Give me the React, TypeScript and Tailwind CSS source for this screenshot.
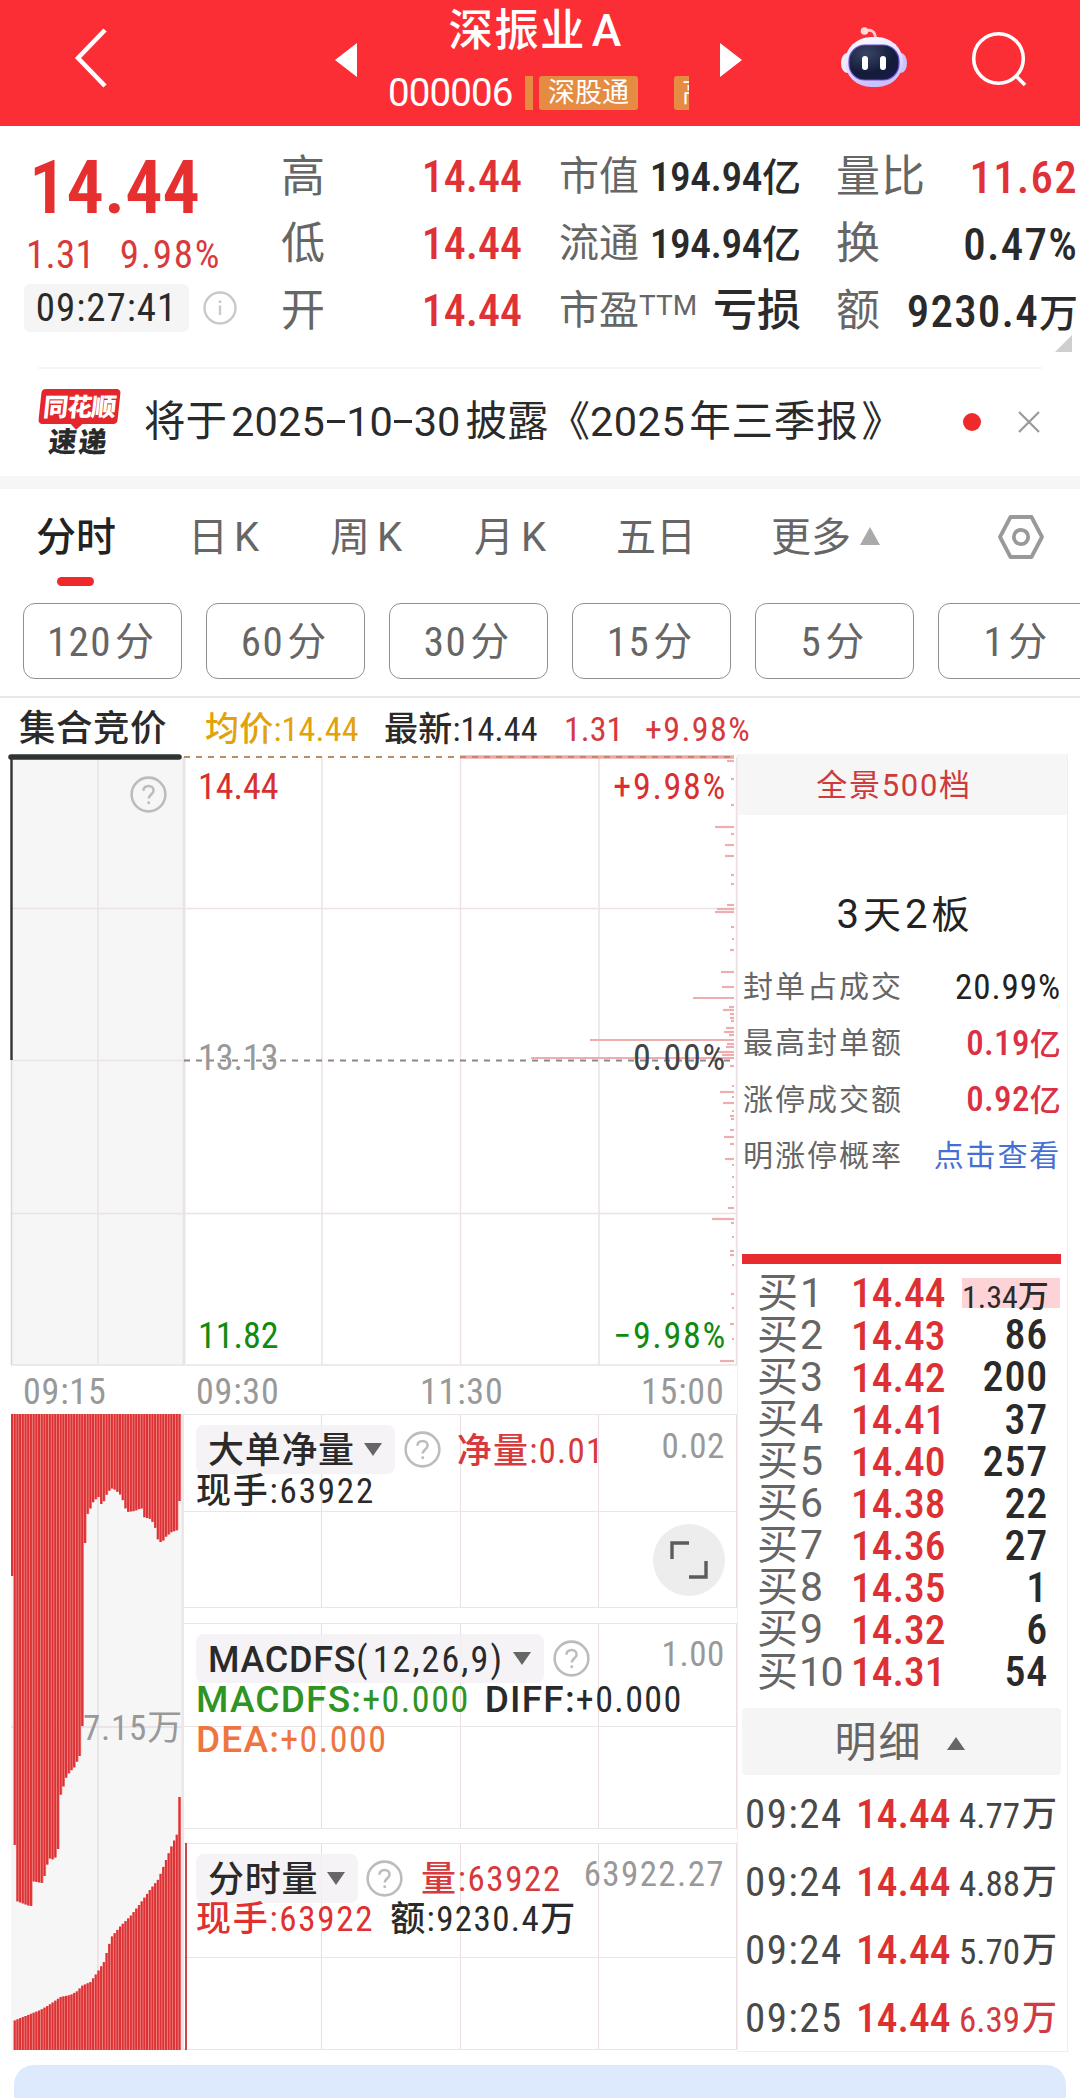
import type { ReactNode } from 'react';

const NUM = '[font-stretch:75%]';

const stats = [
  [
    { label: '高', value: '14.44', tone: 'text-[#e03236]' },
    { label: '低', value: '14.44', tone: 'text-[#e03236]' },
    { label: '开', value: '14.44', tone: 'text-[#e03236]' },
  ],
  [
    { label: '市值', value: '194.94', unit: '亿', tone: 'text-[#2a2a2a]' },
    { label: '流通', value: '194.94', unit: '亿', tone: 'text-[#2a2a2a]' },
    { label: '市盈', sup: 'TTM', value: '', unit: '亏损', tone: 'text-[#2a2a2a]' },
  ],
  [
    { label: '量比', value: '11.62', tone: 'text-[#e03236]' },
    { label: '换', value: '0.47%', tone: 'text-[#2a2a2a]' },
    { label: '额', value: '9230.4', unit: '万', tone: 'text-[#2a2a2a]' },
  ],
];

const statLabelStyles = ['', 'text-[40px]', 'tracking-[1px]'];
const statValueStyles = ['text-[44px]', 'text-[41.5px] tracking-[-0.5px] -mr-[2px]', 'text-[45px] tracking-[1.2px] -mr-[1px]'];

const periods = ['120', '60', '30', '15', '5', '1'];

const bids = [
  ['1', '14.44', '1.34'],
  ['2', '14.43', '86'],
  ['3', '14.42', '200'],
  ['4', '14.41', '37'],
  ['5', '14.40', '257'],
  ['6', '14.38', '22'],
  ['7', '14.36', '27'],
  ['8', '14.35', '1'],
  ['9', '14.32', '6'],
  ['10', '14.31', '54'],
];

const trades = [
  ['09:24', '14.44', '4.77'],
  ['09:24', '14.44', '4.88'],
  ['09:24', '14.44', '5.70'],
  ['09:25', '14.44', '6.39'],
];

// [y, length] of the volume-by-price ticks on the right edge of the chart
const priceTicks = [
  [4, 7], [22, 3], [48, 3], [70, 19], [77, 3], [88, 9], [99, 9], [118, 3], [127, 3],
  [148, 7], [152, 17], [155, 19], [170, 3], [182, 2], [193, 4], [215, 13], [230, 12],
  [241, 41], [250, 5], [253, 11], [257, 4], [261, 4], [264, 3], [271, 8], [275, 10],
  [278, 5], [283, 144], [287, 7], [290, 8], [295, 17], [298, 12], [301, 203], [309, 4],
  [329, 2], [335, 14], [340, 2], [346, 11], [354, 2], [359, 4], [362, 3], [373, 4],
  [380, 10], [387, 4], [402, 9], [408, 2], [420, 2], [430, 2], [440, 2], [451, 6],
  [462, 22], [466, 3], [480, 2], [494, 4], [498, 4], [508, 2], [537, 3], [551, 2],
  [567, 4], [582, 2], [604, 14],
];

// auction histogram outlines, [x, y] relative to the panel
const topEdge = [
  [0, 162], [2, 431], [5, 487], [18, 492], [20, 467], [31, 469], [34, 458], [37, 444], [43, 446],
  [46, 435], [48, 384], [51, 375], [55, 362], [60, 356], [64, 352], [67, 342], [69, 312],
  [71, 167], [73, 129], [76, 100], [79, 94], [82, 87], [87, 83], [90, 91], [93, 86],
  [96, 78], [101, 74], [105, 77], [109, 81], [112, 88], [115, 98], [123, 97], [130, 94],
  [132, 103], [139, 105], [143, 111], [146, 125], [150, 129], [154, 123], [160, 118],
  [166, 116], [167.4, 87],
];
const bottomEdge = [
  [2, 607], [9, 604], [19, 600], [29, 596], [39, 590], [49, 583], [59, 581], [66, 577],
  [70, 572], [79, 568], [86, 558], [93, 547], [96, 535], [100, 523], [109, 512], [119, 502],
  [129, 489], [139, 475], [147, 465], [154, 447], [160, 432], [166, 419], [167.4, 383],
];

const valueAt = (edge: number[][], x: number) => {
  let i = 0;
  while (i < edge.length - 1 && edge[i + 1][0] <= x) i++;
  const a = edge[i];
  const b = edge[i + 1];
  if (!b || Math.abs(b[1] - a[1]) > 24) return a[1];
  return a[1] + ((b[1] - a[1]) * Math.max(0, x - a[0])) / (b[0] - a[0]);
};

const Question = ({ className = '' }: { className?: string }) => (
  <svg viewBox="0 0 40 40" className={`size-[39px] shrink-0 ${className}`} fill="none" stroke="#bdbbbc" strokeWidth="2.6">
    <circle cx="20" cy="20" r="17.3" />
    <path d="M14.8 16.2c0-3 2.2-5 5.2-5s5.2 2 5.2 4.7c0 3.9-5 4.3-5 8.3" />
    <circle cx="20.2" cy="28.5" r="0.9" fill="#bdbbbc" strokeWidth="1.2" />
  </svg>
);

const Header = () => (
  <header className="flex h-[126px] items-start bg-[#fb2d35] text-white">
    <svg viewBox="0 0 34 60" className="ml-[72px] mt-[28px] h-[60px] w-[36px]" fill="none" stroke="#fff" strokeWidth="4.5">
      <path d="M32 2 5 30l27 28" />
    </svg>
    <svg viewBox="0 0 22 34" className="ml-[227px] mt-[43px] h-[34px] w-[22px]" fill="#fff">
      <path d="M22 0v34L0 17z" />
    </svg>
    <div className="ml-[31px] w-[302px] pt-[6px]">
      <h1 className="flex justify-center gap-[6px] pr-[7px] text-[44.5px] font-medium leading-[50px] tracking-[1.2px]">
        深振业<span>A</span>
      </h1>
      <div className="mt-[20px] flex h-[34px] items-center overflow-hidden">
        <span className="w-[137px] text-[38.5px] leading-none tracking-[-0.9px]">000006</span>
        <span className="h-full w-[8px] shrink-0 bg-[#e58b42]" />
        <span className="ml-[6px] h-full w-[99px] shrink-0 rounded-[3px] bg-[#e58b42] text-center text-[27px] leading-[34px]">
          深股通
        </span>
        <span className="ml-[36px] h-full w-[15px] shrink-0 overflow-hidden rounded-l-[3px] bg-[#e58b42] pl-[8px] text-[27px] leading-[34px]">
          高
        </span>
      </div>
    </div>
    <svg viewBox="0 0 22 34" className="ml-[30px] mt-[43px] h-[34px] w-[22px]" fill="#fff">
      <path d="M0 0v34l22-17z" />
    </svg>
    <svg viewBox="0 0 66 62" className="ml-[99px] mt-[26px] h-[62px] w-[66px]">
      <defs>
        <linearGradient id="shell" x1="0" y1="0" x2="0.3" y2="1">
          <stop offset="0" stopColor="#ffffff" />
          <stop offset="0.6" stopColor="#e3ddff" />
          <stop offset="1" stopColor="#c9c2ff" />
        </linearGradient>
        <radialGradient id="visor" cx="0.35" cy="0.25" r="0.9">
          <stop offset="0" stopColor="#3a4468" />
          <stop offset="0.6" stopColor="#131c38" />
          <stop offset="1" stopColor="#1a1a4a" />
        </radialGradient>
      </defs>
      <path d="M24 5c6-2 10 0 10.5 7" fill="none" stroke="#ffc9cf" strokeWidth="2.8" />
      <circle cx="23.5" cy="5" r="3.8" fill="#ffd9dc" />
      <ellipse cx="6" cy="37" rx="6" ry="10" fill="#efeaff" />
      <ellipse cx="60" cy="37" rx="6" ry="10" fill="#c9c5ff" />
      <rect x="4" y="11" width="58" height="50" rx="26" fill="url(#shell)" />
      <rect x="8" y="19" width="50" height="35" rx="16" fill="url(#visor)" stroke="#6b4fd0" strokeWidth="1.2" />
      <rect x="21" y="30" width="6" height="14" rx="3" fill="#fff" />
      <rect x="39" y="30" width="6" height="14" rx="3" fill="#fff" />
    </svg>
    <svg viewBox="0 0 56 56" className="ml-[64px] mt-[31px] size-[56px]" fill="none" stroke="#fff" strokeWidth="3.6">
      <circle cx="27.5" cy="27.5" r="24.8" />
      <path d="m45 45 9 9" />
    </svg>
  </header>
);

const Quote = () => (
  <section className="flex h-[241px] pt-[17px]">
    <div className="w-[281px] pl-[24px]">
      <div className={`mt-[7px] pl-[5px] text-[74.5px] font-semibold leading-[76px] text-[#e62f2f] ${NUM}`}>14.44</div>
      <div className={`mt-[8px] flex h-[42px] items-center gap-[25px] pl-[2px] text-[39px] leading-none text-[#d83a3c] ${NUM}`}>
        <span className="tracking-[0.2px]">1.31</span>
        <span className="tracking-[1.7px]">9.98%</span>
      </div>
      <div className="mt-[8px] flex items-center">
        <span className={`flex h-[48px] w-[165px] items-center justify-center rounded-[6px] bg-[#f5f5f5] text-[39px] leading-none tracking-[1px] text-[#2a2a2a] ${NUM}`}>
          09:27:41
        </span>
        <svg viewBox="0 0 34 34" className="ml-[14px] size-[34px]" fill="none" stroke="#c9c9c9" strokeWidth="2.4">
          <circle cx="17" cy="17" r="15.5" />
          <path d="M17 14.5v9.5M17 9.5v2.5" />
        </svg>
      </div>
    </div>
    <div className="grid grid-cols-[241px_240px_241px] gap-x-[37px]">
      {stats.map((col, i) => (
        <div key={i} className="flex flex-col">
          {col.map((item) => (
            <div key={item.label} className="flex h-[67px] items-center justify-between whitespace-nowrap text-[44px] leading-none">
              <span className={`flex text-[#666] ${statLabelStyles[i]}`}>
                {item.label}
                {'sup' in item && <span className="mt-[1px] text-[28px]">{item.sup}</span>}
              </span>
              <span className={`pt-[1px] font-medium ${NUM} ${item.tone} ${statValueStyles[i]}`}>
                {item.value}
                {'unit' in item && (
                  <span className={item.value ? 'text-[39px] tracking-normal' : 'text-[44px] tracking-normal'}>{item.unit}</span>
                )}
              </span>
            </div>
          ))}
        </div>
      ))}
    </div>
  </section>
);

const Notice = () => (
  <section className="relative h-[109px]">
    <svg viewBox="0 0 17 17" className="absolute -top-[32px] right-[8px] size-[17px]" fill="#cfcfcf">
      <path d="M17 0v17H0z" />
    </svg>
    <div className="mx-[38px] flex h-full items-center border-t-2 border-[#f8f3f4] pb-[2px]">
      <div className="flex w-[82px] flex-col items-center font-['Noto_Sans_CJK_SC',sans-serif] font-black">
        <div className="relative h-[35px] w-[79px] -skew-x-6 rounded-[4px] bg-[#e5262c] text-center text-[25px] leading-[33px] tracking-[-1px] text-white">
          同花顺
          <span className="absolute -bottom-[4px] left-[34px] size-[9px] rotate-45 bg-[#e5262c]" />
        </div>
        <div className="mt-[2px] -skew-x-6 text-[28px] leading-[29px] tracking-[2px] text-[#2a2a2a]">速递</div>
      </div>
      <p className="ml-[24px] flex w-[780px] items-center whitespace-nowrap text-[41.5px] leading-none text-[#2a2a2a]">
        <span>将于</span>
        <span className="ml-[4px] tracking-[0.2px]">2025</span>
        <span className="mx-[1.5px] h-[3.5px] w-[18px] bg-[#2a2a2a]" />
        <span>10</span>
        <span className="mx-[1.5px] h-[3.5px] w-[18px] bg-[#2a2a2a]" />
        <span>30</span>
        <span className="ml-[5px]">披露</span>
        <span>《</span>
        <span className="tracking-[0.5px]">2025</span>
        <span className="ml-[4px] tracking-[0.8px]">年三季报</span>
        <span className="ml-[3px]">》</span>
      </p>
      <span className="ml-[39px] size-[18px] rounded-full bg-[#ee2a2c]" />
      <svg viewBox="0 0 22 22" className="ml-[37px] size-[22px]" stroke="#999" strokeWidth="2.2">
        <path d="m1 1 20 20M21 1 1 21" />
      </svg>
    </div>
  </section>
);

const Tabs = () => (
  <nav className="flex h-[105px] border-t-[13px] border-[#f6f6f6] pl-[36px] text-[40px] leading-none text-[#666]">
    <div className="flex w-[152px] flex-col pt-[29px]">
      <span className="font-medium text-[#222]">分时</span>
      <span className="ml-[21px] mt-[19px] h-[9px] w-[37px] shrink-0 rounded-full bg-[#ee2a2c]" />
    </div>
    <span className="flex w-[142px] gap-[6px] pt-[29px]">日<span>K</span></span>
    <span className="flex w-[144px] gap-[7px] pt-[29px]">周<span>K</span></span>
    <span className="flex w-[142px] gap-[7px] pt-[29px]">月<span>K</span></span>
    <span className="w-[155px] pt-[29px]">五日</span>
    <span className="w-[89px] pt-[29px]">更多</span>
    <svg viewBox="0 0 20 18" className="mt-[38px] h-[18px] w-[20px]" fill="#aaa">
      <path d="M10 0 20 18H0z" />
    </svg>
    <svg viewBox="0 0 46 44" className="ml-[118px] mt-[26px] h-[44px] w-[46px]" fill="none" stroke="#999" strokeWidth="3.8" strokeLinejoin="round">
      <path d="M12.5 2h21L44 22 33.5 42h-21L2 22z" />
      <circle cx="23" cy="22" r="7.2" />
    </svg>
  </nav>
);

const Periods = () => (
  <div className="flex h-[117px] gap-[24px] overflow-hidden border-b-2 border-[#e8e8e8] pl-[23px] pt-[22px]">
    {periods.map((p) => (
      <button key={p} className="flex h-[76px] w-[159px] shrink-0 items-center justify-center gap-[3px] rounded-[12px] border-[1.5px] border-[#909090] pr-[4px] pt-[2px] text-[39px] leading-none text-[#666]">
        <span className={`text-[41px] tracking-[1.5px] ${NUM}`}>{p}</span>分
      </button>
    ))}
  </div>
);

const InfoLine = () => (
  <div className="flex h-[56px] items-center whitespace-nowrap pl-[19px] pt-[5px] text-[34px] leading-none [font-weight:450]">
    <span className="w-[186px] pt-[1px] text-[36.5px] tracking-[0.5px] text-[#2a2a2a]">集合竞价</span>
    <span className={`w-[179px] tracking-[0.2px] text-[#e2a20c] ${NUM}`}>均价:14.44</span>
    <span className={`w-[180px] tracking-[0.2px] text-[#2a2a2a] ${NUM}`}>最新:14.44</span>
    <span className={`w-[81px] text-[#d43a3e] ${NUM}`}>1.31</span>
    <span className={`tracking-[1.4px] text-[#d43a3e] ${NUM}`}>+9.98%</span>
  </div>
);

const AuctionPrice = () => (
  <div className="relative h-[608px] w-[173px] bg-[#f6f6f6]">
    <svg viewBox="0 0 173 608" className="absolute inset-0 size-full overflow-visible" fill="none">
      <path d="M87 0v608M0 151.5h173M0 303.5h173M0 456.5h173M0 608h173" stroke="#eae2e4" strokeWidth="1.5" />
      <path d="M173 0v608" stroke="#eae4e8" strokeWidth="3" />
      <path d="M.5 303v305" stroke="#d9d7d8" strokeWidth="1.5" />
      <path d="M.5 0v303" stroke="#2f3333" strokeWidth="2.4" />
      <path d="M0 0h168" stroke="#2f3333" strokeWidth="5.5" strokeLinecap="round" />
    </svg>
    <Question className="relative ml-[118px] mt-[18px]" />
  </div>
);

const DayPrice = () => (
  <div className={`relative flex h-[608px] w-[553px] flex-col justify-between pb-[11px] pl-[14px] pr-[10px] pt-[12px] text-[36px] leading-none ${NUM}`}>
    <svg viewBox="0 0 553 608" className="absolute inset-0 size-full overflow-visible" fill="none">
      <path d="M138 0v608M276.5 0v608M415 0v608M552.5 0v608M0 151.5h553M0 456.5h553M0 608h553" stroke="#ece2e5" strokeWidth="1.5" />
      {priceTicks.map(([y, len]) => (
        <path key={y} d={`M${550 - len} ${y}h${len}`} stroke="#efadae" strokeWidth="2.2" />
      ))}
      <path d="M276 0h274" stroke="#f2a7a6" strokeWidth="3.5" />
      <path d="M0 0h552" stroke="#bb8d66" strokeWidth="2" strokeDasharray="6 6" />
      <path d="M0 303.5h552" stroke="#8d8788" strokeWidth="2" strokeDasharray="6 6" />
    </svg>
    <div className="relative flex justify-between text-[#d8302f]">
      <span>14.44</span>
      <span className="tracking-[1.7px]">+9.98%</span>
    </div>
    <div className="relative -mt-[8px] flex justify-between text-[#999]">
      <span>13.13</span>
      <span className="tracking-[1.7px] text-[#444]">0.00%</span>
    </div>
    <div className="relative flex justify-between text-[#0f8c10]">
      <span>11.82</span>
      <span className="tracking-[1.7px]">−9.98%</span>
    </div>
  </div>
);

const TimeAxis = () => (
  <div className={`flex h-[49px] items-center pt-[5px] text-[36px] leading-none tracking-[0.8px] text-[#999] ${NUM}`}>
    <span className="w-[173px] pl-[12px]">09:15</span>
    <span className="w-[223px] pl-[12px]">09:30</span>
    <span className="w-[222px] pl-[13px]">11:30</span>
    <span className="pl-[12px]">15:00</span>
  </div>
);

const AuctionVolume = () => {
  const step = 2.7;
  const bars = Array.from({ length: 63 }, (_, i) => i * step);
  return (
    <div className="relative flex h-[636px] w-[173px] items-center justify-end bg-[#f6f6f6]">
      <svg viewBox="0 0 173 636" className="absolute inset-0 size-full">
        <path d="M87 0v636M0 313h173" stroke="#e6dee3" strokeWidth="1.5" />
        <path d="M172 0v636" stroke="#ece6ea" strokeWidth="3" />
        {bars.map((x) => {
          const top = valueAt(topEdge, x + 0.5);
          const low = valueAt(bottomEdge, x + 0.5);
          return (
            <g key={x}>
              <rect x={x} y="0" width={step} height={top} fill="#f28a88" />
              <rect x={x} y="0" width="2" height={top} fill="#dc3235" />
              {x > 1 && <rect x={x} y={low} width={step} height={636 - low} fill="#f28a88" />}
              {x > 1 && <rect x={x} y={low} width="2" height={636 - low} fill="#dc3235" />}
            </g>
          );
        })}
      </svg>
      <span className={`relative mb-[8px] mr-[1px] text-[35px] leading-none tracking-[0.8px] text-[#999] ${NUM}`}>7.15万</span>
    </div>
  );
};

const SubChart = ({ height, mid, children }: { height: string; mid: string; children: ReactNode }) => (
  <div className={`relative w-[553px] border-y-[1.5px] border-[#ebe5e8] ${height}`}>
    <div className="absolute inset-0 grid grid-cols-4">
      <span className="border-r border-[#e9dfe3]" />
      <span className="border-r border-[#e9dfe3]" />
      <span className="border-r border-[#e9dfe3]" />
      <span className="border-r border-[#e9dfe3]" />
    </div>
    <div className={`absolute inset-x-0 border-t-[1.5px] border-[#ebe5e8] ${mid}`} />
    <div className="relative pl-[12px] pr-[12px] pt-[10px] text-[35px] leading-none text-[#2a2a2a]">{children}</div>
  </div>
);

const Chip = ({ children }: { children: ReactNode }) => (
  <span className="flex h-[49px] items-center gap-[9px] whitespace-nowrap rounded-[8px] bg-[#f3f0f3]/80 pl-[12px] pr-[13px] text-[36px] font-medium tracking-[0.7px]">
    <span className="pt-[2px]">{children}</span>
    <svg viewBox="0 0 18 13" className="h-[13px] w-[18px]" fill="#666">
      <path d="M0 0h18L9 13z" />
    </svg>
  </span>
);

const SubCharts = () => (
  <div className="flex w-[553px] flex-col">
    <SubChart height="h-[194px]" mid="top-[96px]">
      <div className="flex items-center">
        <Chip>大单净量</Chip>
        <Question className="ml-[8px]" />
        <span className={`ml-[15px] pt-[3px] tracking-[1.2px] text-[#d63a3d] [font-weight:450] ${NUM}`}>净量:0.01</span>
        <span className={`mb-[7px] ml-auto tracking-[0.6px] text-[#999] ${NUM}`}>0.02</span>
      </div>
      <div className={`tracking-[1.8px] [font-weight:450] ${NUM}`}>现手:63922</div>
      <div className="ml-auto mt-[15px] flex size-[72px] items-center justify-center rounded-full bg-[#ededed]">
        <svg viewBox="0 0 38 38" className="size-[38px]" fill="none" stroke="#5c5c5c" strokeWidth="3.4">
          <path d="M2 18V2h17M36 20v16H19" />
        </svg>
      </div>
    </SubChart>
    <SubChart height="mt-[15px] h-[206px]" mid="top-[102px]">
      <div className="flex items-center">
        <Chip>
          MACDFS<span className={`tracking-[2.1px] [font-weight:450] ${NUM}`}>(<span className="ml-[3px]">12,26,9</span>)</span>
        </Chip>
        <Question className="ml-[8px]" />
        <span className={`mb-[8px] ml-auto tracking-[0.6px] text-[#999] ${NUM}`}>1.00</span>
      </div>
      <div className="-mt-[3px] flex items-center gap-[15px] whitespace-nowrap text-[37px] leading-[40px] tracking-[1.2px]">
        <span className="font-medium text-[#2f9423]">
          MACDFS:<span className={`text-[36px] tracking-[1.5px] [font-weight:450] ${NUM}`}>+0.000</span>
        </span>
        <span className="font-medium">
          DIFF:<span className={`text-[36px] tracking-[1.4px] [font-weight:450] ${NUM}`}>+0.000</span>
        </span>
      </div>
      <div className="text-[37px] font-medium leading-[40px] tracking-[1.2px] text-[#ee7440]">
        DEA:<span className={`text-[36px] tracking-[1.5px] [font-weight:450] ${NUM}`}>+0.000</span>
      </div>
    </SubChart>
    <SubChart height="mt-[14px] h-[207px]" mid="top-[113px]">
      <span className="absolute -top-[1px] left-[1px] h-[207px] w-[2px] bg-[#c8484b]" />
      <div className="flex items-center">
        <Chip>分时量</Chip>
        <Question className="ml-[7px]" />
        <span className={`ml-[17px] pt-[2px] tracking-[1.6px] text-[#d63a3d] [font-weight:450] ${NUM}`}>量:63922</span>
        <span className={`mb-[8px] ml-auto tracking-[1.4px] text-[#999] ${NUM}`}>63922.27</span>
      </div>
      <div className={`-mt-[1px] flex gap-[16px] tracking-[1.7px] [font-weight:450] ${NUM}`}>
        <span className="text-[#e0302f]">现手:63922</span>
        <span className="tracking-[1.4px]">额:9230.4万</span>
      </div>
    </SubChart>
  </div>
);

const SideRow = ({ label, children }: { label: string; children: ReactNode }) => (
  <div className="flex h-[56.3px] items-center justify-between pl-[5px] pr-[6px] text-[30px] leading-none">
    <span className="tracking-[2px] text-[#666]">{label}</span>
    {children}
  </div>
);

const OrderBook = () => (
  <aside className="flex h-[1298px] w-[331px] flex-col border-x border-b border-[#f5ecee] *:shrink-0">
    <div className="flex h-[61px] items-center justify-center bg-[#f6f6f6] pr-[17px] pt-[2px] text-[31px] leading-none tracking-[1.7px] text-[#cf3a3a]">
      全景500档
    </div>
    <div className="mt-[78px] flex h-[44px] items-center justify-center gap-[4px] pl-[1px] text-[38px] leading-none text-[#222]">
      <span className="text-[40px]">3</span>天<span className="text-[40px]">2</span>板
    </div>
    <div className="mt-[22px]">
      <SideRow label="封单占成交">
        <span className={`text-[35px] tracking-[0.9px] text-[#222] ${NUM}`}>20.99%</span>
      </SideRow>
      <SideRow label="最高封单额">
        <span className={`text-[35px] font-medium tracking-[0.3px] text-[#dc3045] ${NUM}`}>0.19<span className="text-[31px]">亿</span></span>
      </SideRow>
      <SideRow label="涨停成交额">
        <span className={`text-[35px] font-medium tracking-[0.3px] text-[#dc3045] ${NUM}`}>0.92<span className="text-[31px]">亿</span></span>
      </SideRow>
      <SideRow label="明涨停概率">
        <span className="tracking-[1.8px] text-[#466fd6]">点击查看</span>
      </SideRow>
    </div>
    <div className="ml-[4px] mt-[70px] h-[10px] w-[319px] bg-[#e82b2e]" />
    <div className="mt-[8px]">
      {bids.map(([n, price, vol], i) => (
        <div key={n} className="flex h-[42.1px] items-center pl-[19px] leading-none">
          <span className="flex w-[94px] items-center gap-[2px] text-[41px] text-[#666]">
            买<span className={n === '10' ? '-ml-[1px] tracking-[-1.5px]' : ''}>{n}</span>
          </span>
          <span className={`w-[111px] text-[41.5px] font-medium text-[#dd3033] ${NUM}`}>{price}</span>
          {i === 0 ? (
            <span className={`flex h-[30px] w-[98px] items-center whitespace-nowrap bg-[#fdd3d8] pt-[7px] text-[32px] text-[#2a2a2a] [font-weight:450] ${NUM}`}>
              {vol}<span className="text-[31px]">万</span>
            </span>
          ) : (
            <span className={`w-[86px] text-right text-[42px] font-medium tracking-[0.8px] text-[#2a2a2a] ${NUM}`}>{vol}</span>
          )}
        </div>
      ))}
    </div>
    <div className="ml-[4px] mt-[15px] flex h-[67px] w-[319px] items-center justify-center gap-[24px] rounded-[4px] bg-[#f5f5f5] pr-[4px] pt-[3px] text-[42px] leading-none tracking-[2px] text-[#666]">
      明细
      <svg viewBox="0 0 18 13" className="h-[13px] w-[18px]" fill="#666">
        <path d="M9 0 18 13H0z" />
      </svg>
    </div>
    <div className="mt-[5px]">
      {trades.map(([time, price, vol], i) => (
        <div key={vol} className={`flex h-[68px] items-center whitespace-nowrap pl-[7px] text-[41px] leading-none [font-weight:450] ${NUM}`}>
          <span className="w-[111px] tracking-[1.4px] text-[#4a4a4a]">{time}</span>
          <span className="w-[103px] text-[41.5px] font-medium text-[#dd3033]">{price}</span>
          <span className={`flex items-center text-[35px] ${i === 3 ? 'text-[#d23a42]' : 'text-[#444]'}`}>
            <span className="pt-[5px]">{vol}</span>
            <span className="ml-[2px] text-[35px]">万</span>
          </span>
        </div>
      ))}
    </div>
  </aside>
);

export default function App() {
  return (
    <div className="h-[2098px] w-[1080px] overflow-hidden bg-white font-['Roboto','Noto_Sans_CJK_SC',sans-serif]">
      <Header />
      <Quote />
      <Notice />
      <Tabs />
      <Periods />
      <InfoLine />
      <main className="flex">
        <div className="w-[737px] pl-[11px] pt-[3px]">
          <div className="flex">
            <AuctionPrice />
            <DayPrice />
          </div>
          <TimeAxis />
          <div className="flex">
            <AuctionVolume />
            <SubCharts />
          </div>
        </div>
        <OrderBook />
      </main>
      <div className="mx-[14px] mt-[13px] h-[60px] rounded-t-[20px] bg-[#dde9fc]" />
    </div>
  );
}
